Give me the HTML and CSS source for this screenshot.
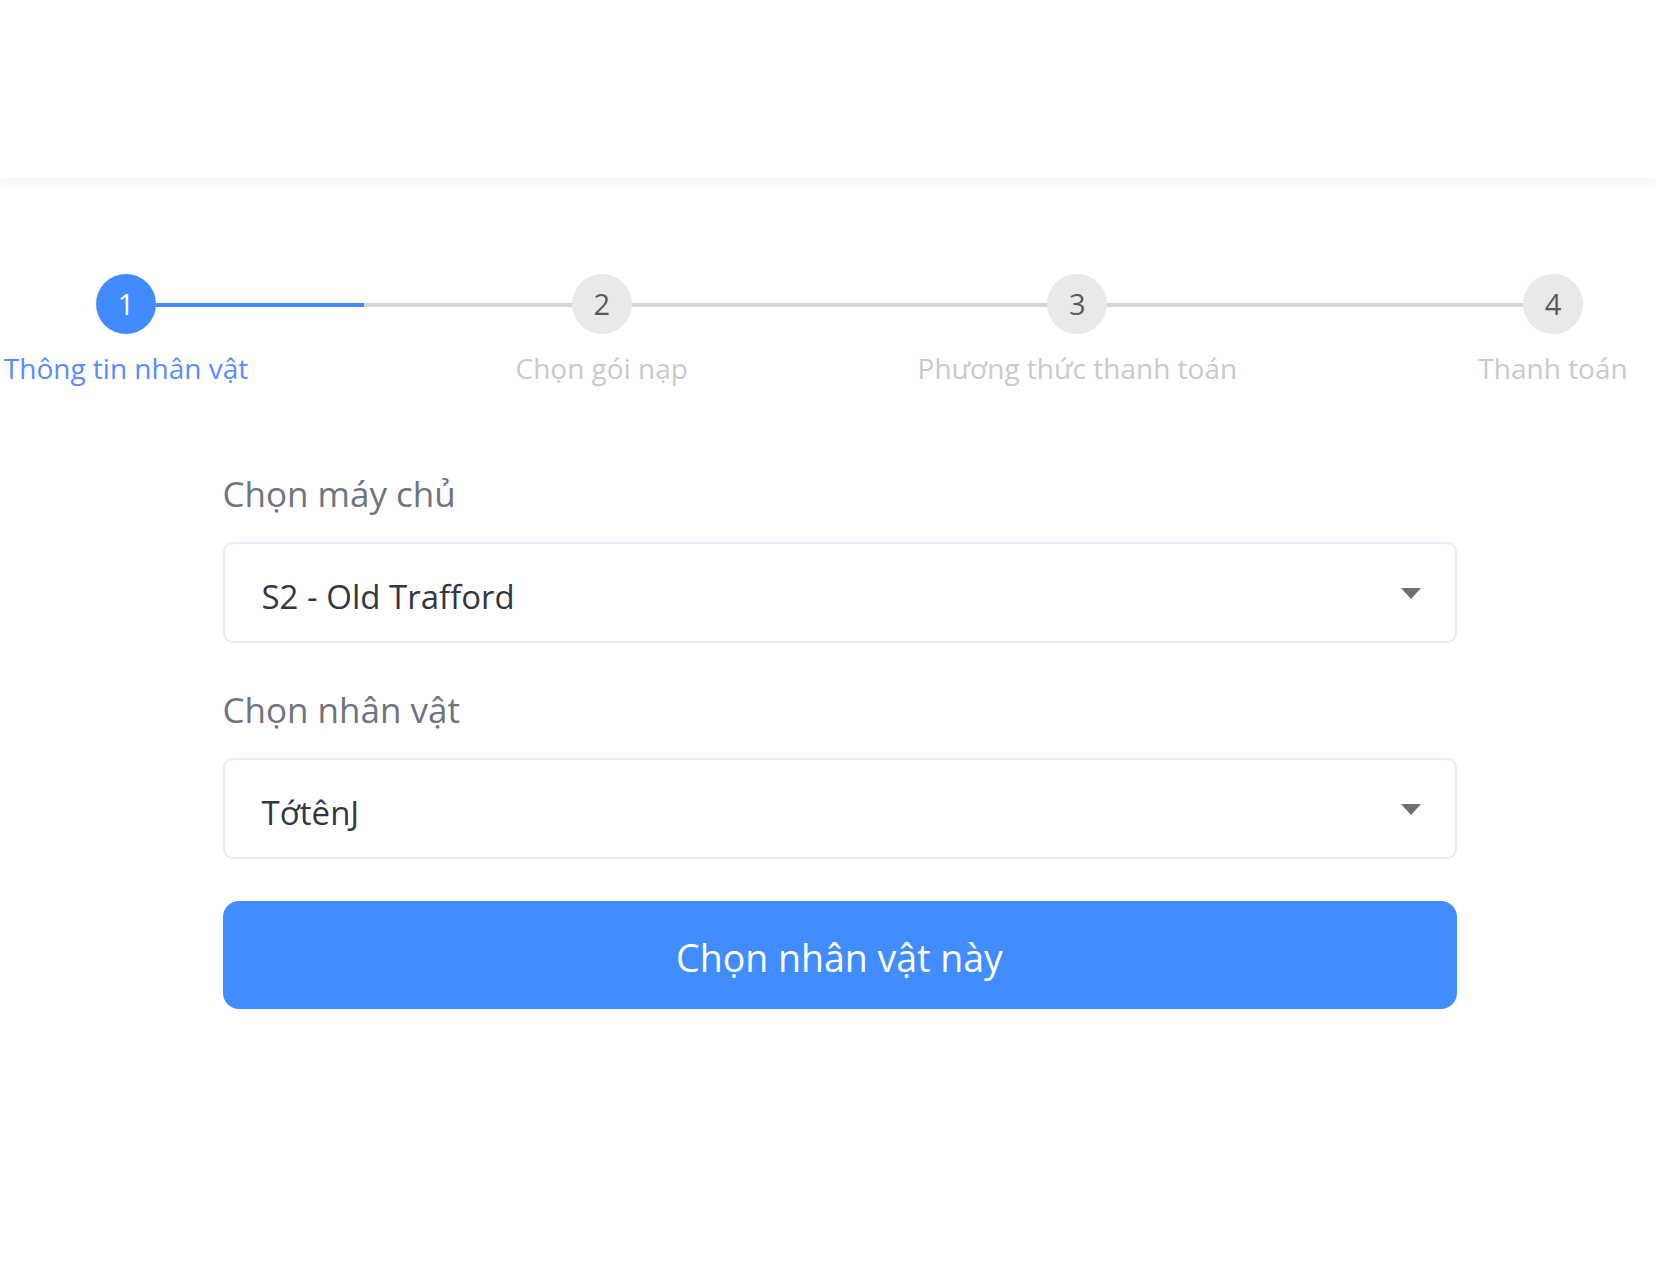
FILE: index.html
```html
<!DOCTYPE html>
<html lang="vi">
<head>
<meta charset="utf-8">
<title>Nạp thẻ</title>
<link rel="stylesheet" href="styles.css">
</head>
<body>
<header class="topbar"></header>
<main class="main">
  <div class="steps">
    <div class="step step-active">
      <div class="step-circle">1</div>
      <div class="step-label">Thông tin nhân vật</div>
    </div>
    <div class="step-line"><div class="step-line-fill"></div></div>
    <div class="step">
      <div class="step-circle">2</div>
      <div class="step-label">Chọn gói nạp</div>
    </div>
    <div class="step-line"></div>
    <div class="step">
      <div class="step-circle">3</div>
      <div class="step-label">Phương thức thanh toán</div>
    </div>
    <div class="step-line"></div>
    <div class="step">
      <div class="step-circle">4</div>
      <div class="step-label">Thanh toán</div>
    </div>
  </div>

  <form class="form">
    <div class="field">
      <div class="field-label">Chọn máy chủ</div>
      <div class="select">
        <span class="select-value">S2 - Old Trafford</span>
        <span class="select-arrow"></span>
      </div>
    </div>
    <div class="field">
      <div class="field-label">Chọn nhân vật</div>
      <div class="select">
        <span class="select-value">TớtênJ</span>
        <span class="select-arrow"></span>
      </div>
    </div>
    <button type="button" class="btn-primary">Chọn nhân vật này</button>
  </form>
</main>
</body>
</html>
```

FILE: styles.css
```css
html, body {
  margin: 0;
  padding: 0;
  background: #ffffff;
  overflow-x: hidden;
}

body {
  font-family: "Open Sans", "Noto Sans", "DejaVu Sans", sans-serif;
  color: #333333;
}

.topbar {
  height: 178px;
  background: #ffffff;
  box-shadow: 0 4px 12px rgba(0, 0, 0, 0.05);
  position: relative;
  z-index: 1;
}

.main {
  padding-left: 24px;
}

.steps {
  display: flex;
  align-items: flex-start;
  padding: 96px 72px 0 72px;
}

.step {
  width: 60px;
  flex: 0 0 60px;
  display: flex;
  flex-direction: column;
  align-items: center;
}

.step-circle {
  width: 60px;
  height: 60px;
  border-radius: 50%;
  background: #e9e9e9;
  color: #555a63;
  font-size: 29px;
  line-height: 60px;
  text-align: center;
}

.step-active .step-circle {
  background: #418bff;
  color: #ffffff;
}

.step-label {
  margin-top: 15px;
  font-size: 28px;
  line-height: 39px;
  white-space: nowrap;
  color: #cfc8c8;
}

.step-active .step-label {
  color: #5b8cff;
}

.step-line {
  flex: 1 1 auto;
  height: 4px;
  margin-top: 29px;
  background: #d6d6d6;
}

.step-line-fill {
  width: 50%;
  height: 100%;
  background: #418bff;
}

.form {
  width: 1234px;
  margin: 82px auto 0 auto;
  display: flex;
  flex-direction: column;
}

.field {
  display: flex;
  flex-direction: column;
  margin-bottom: 43px;
}

.field + .field {
  margin-bottom: 42px;
}

.field-label {
  font-size: 35px;
  line-height: 48px;
  color: #6f747d;
  margin-bottom: 24px;
}

.select {
  box-sizing: border-box;
  height: 101px;
  border: 2px solid #e6ebf3;
  border-radius: 10px;
  display: flex;
  align-items: center;
  justify-content: space-between;
  padding: 7px 34px 0 37px;
}

.select-value {
  font-size: 33px;
  line-height: 45px;
  color: #333740;
}

.select-arrow {
  width: 0;
  height: 0;
  margin-top: -6px;
  border-left: 10px solid transparent;
  border-right: 10px solid transparent;
  border-top: 11px solid #6f6f6f;
}

.btn-primary {
  height: 108px;
  border: none;
  border-radius: 16px;
  background: #418cff;
  color: #ffffff;
  font-family: "Open Sans", "Noto Sans", "DejaVu Sans", sans-serif;
  font-size: 37.5px;
  padding: 4px 0 0 0;
  cursor: pointer;
}
```
